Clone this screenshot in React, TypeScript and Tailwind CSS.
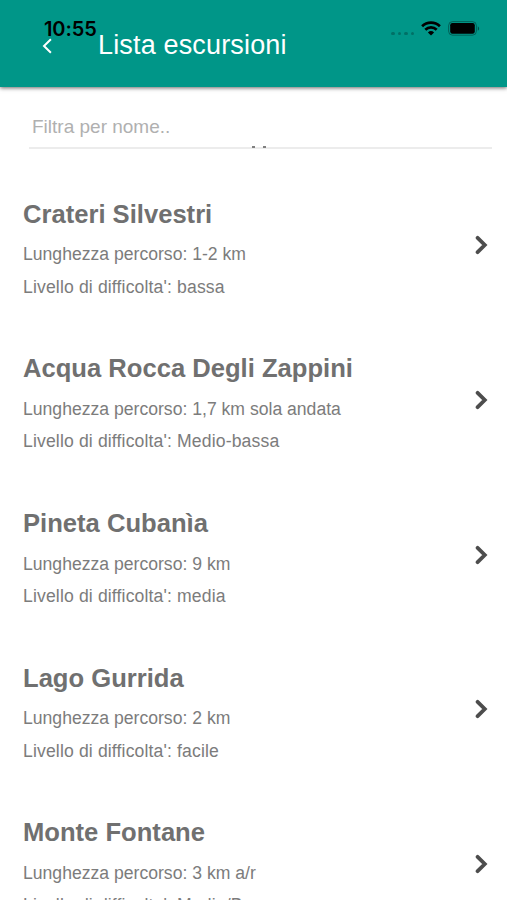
import React from "react";

interface Hike {
  name: string;
  length: string;
  difficulty: string;
}

const hikes: Hike[] = [
  { name: "Crateri Silvestri", length: "1-2 km", difficulty: "bassa" },
  {
    name: "Acqua Rocca Degli Zappini",
    length: "1,7 km sola andata",
    difficulty: "Medio-bassa",
  },
  { name: "Pineta Cubanìa", length: "9 km", difficulty: "media" },
  { name: "Lago Gurrida", length: "2 km", difficulty: "facile" },
  { name: "Monte Fontane", length: "3 km a/r", difficulty: "Medio/Bassa" },
];

function StatusBar() {
  return (
    <div className="absolute inset-x-0 top-[18px] h-5 flex items-center justify-between pl-[44px] pr-[26px] text-black">
      <span className="font-['Inter'] font-semibold text-[20px] leading-5 tracking-[-0.1px] mt-[1px]">
        10:55
      </span>
      <div className="flex items-center">
        <div className="flex gap-[3px] mt-[11px] mr-[7px]">
          {[0, 1, 2, 3].map((dot) => (
            <span key={dot} className="size-[3.5px] rounded-full bg-black/25" />
          ))}
        </div>
        <svg className="w-5 h-[15px] mr-[7px]" viewBox="0 0 20 15">
          <g fill="none" stroke="#000" strokeWidth="2.7">
            <path d="M1.1 5.2a12.8 12.8 0 0 1 17.8 0" />
            <path d="M4.3 8.7a8.2 8.2 0 0 1 11.4 0" />
          </g>
          <path d="M10 14.6 6.9 11.4a4.5 4.5 0 0 1 6.2 0z" />
        </svg>
        <svg className="w-8 h-[15px] mr-[1px]" viewBox="0 0 32 15">
          <rect
            x="0.6"
            y="0.6"
            width="27.8"
            height="13.6"
            rx="4"
            fill="none"
            stroke="#000"
            strokeOpacity="0.35"
          />
          <rect x="2.2" y="2.1" width="24.6" height="10.6" rx="2.2" />
          <path d="M29.8 5.2v4.6c1.8-.8 1.8-3.8 0-4.6z" fillOpacity="0.45" />
        </svg>
      </div>
    </div>
  );
}

function Header() {
  return (
    <header className="relative z-10 h-[87px] shrink-0 bg-[#009688] shadow-[0_1px_4px_rgba(0,0,0,0.6)]">
      <div className="flex items-center h-[90px] pl-[42px] text-white">
        <svg className="w-[10px] h-4 mt-[2px]" viewBox="0 0 10 16">
          <path
            d="M8.9 1.2 2 8l6.9 6.8"
            fill="none"
            stroke="currentColor"
            strokeWidth="2"
          />
        </svg>
        <h1 className="ml-[46px] text-[27px] leading-8 tracking-[0.16px]">
          Lista escursioni
        </h1>
      </div>
      <StatusBar />
    </header>
  );
}

function HikeRow({ name, length, difficulty }: Hike) {
  return (
    <li className="flex items-center justify-between h-[154.7px] shrink-0 pl-[23px] pr-[19.5px]">
      <div className="mt-[10px] text-[17.6px] leading-[32.4px] text-[#7c7c7c]">
        <h2 className="font-bold text-[25.6px] leading-8 mb-[8.8px] text-[#707070]">
          {name}
        </h2>
        <p>Lunghezza percorso: {length}</p>
        <p className="tracking-[0.14px]">Livello di difficolta': {difficulty}</p>
      </div>
      <svg className="w-[13px] h-5" viewBox="0 0 13 20">
        <path
          d="M2.6 2.8 9.8 10l-7.2 7.2"
          fill="none"
          stroke="#4d4d4d"
          strokeWidth="3.8"
          strokeLinecap="round"
        />
      </svg>
    </li>
  );
}

function App() {
  return (
    <div className="flex flex-col h-[900px] overflow-hidden bg-white font-['Liberation_Sans',sans-serif]">
      <Header />
      <div className="relative h-[62px] shrink-0 ml-[29px] mr-[15px] border-b-2 border-[#ececec]">
        <input
          type="text"
          placeholder="Filtra per nome.."
          className="w-full h-8 mt-[24px] pl-[3px] text-[19px] outline-none placeholder:text-[#b0b0b0]"
        />
        {/* bottom of the row scrolled under the filter */}
        <span className="absolute left-[223px] -bottom-[1px] w-[3px] h-[2px] bg-[#808080]" />
        <span className="absolute left-[234px] -bottom-[1px] w-[3px] h-[2px] bg-[#808080]" />
      </div>
      <ul className="pt-[19px]">
        {hikes.map((hike) => (
          <HikeRow key={hike.name} {...hike} />
        ))}
      </ul>
    </div>
  );
}

export default App;
